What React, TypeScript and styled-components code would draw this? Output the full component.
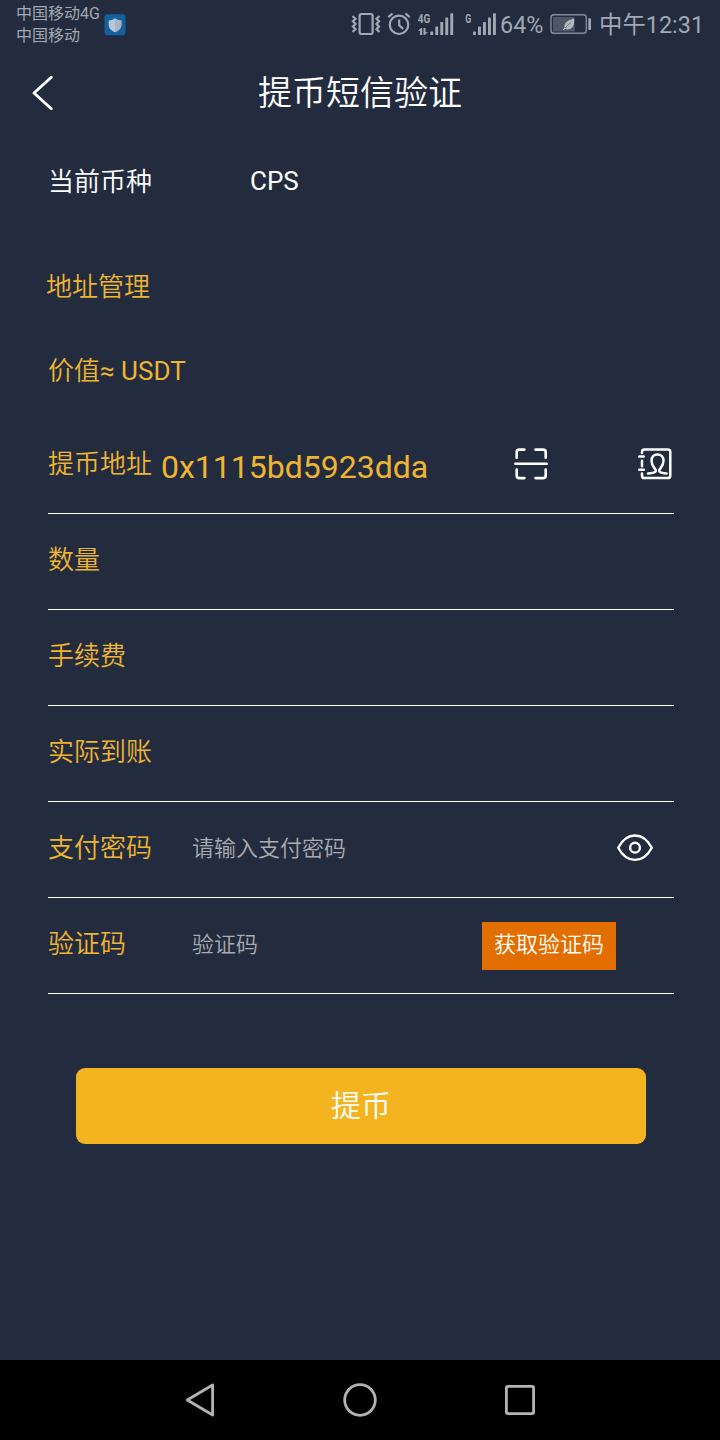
import React from 'react';
import styled, { createGlobalStyle } from 'styled-components';

const GlobalStyle = createGlobalStyle`
  * { box-sizing: border-box; }
  body {
    margin: 0;
    background: #222c3e;
    font-family: Roboto, "Noto Sans CJK SC", sans-serif;
    color: #fff;
  }
  button, input { font-family: inherit; }
`;

const Screen = styled.div`
  width: 720px;
  height: 1440px;
  display: flex;
  flex-direction: column;
  background: #222c3e;
  overflow: hidden;
`;

const StatusBar = styled.div`
  height: 48px;
  display: flex;
  align-items: flex-start;
  padding-left: 16px;
  color: #a2a8b3;
`;

const Carriers = styled.div`
  width: 88px;
  padding-top: 3px;
  font-size: 16px;
  line-height: 22px;
  white-space: nowrap;
`;

const StatusIcons = styled.svg`
  display: block;
  flex: none;
`;

const StatusRight = styled.div`
  margin-left: auto;
  display: flex;
  width: 370px;
`;

const StatusText = styled.span<{ $width: number }>`
  width: ${(p) => p.$width}px;
  padding-top: 1px;
  font-size: 23.4px;
  line-height: 48px;
  white-space: nowrap;
`;

const Header = styled.header`
  height: 90px;
  display: grid;
  grid-template-columns: 72px 1fr 72px;
  align-items: center;
`;

const BackButton = styled.button`
  width: 72px;
  height: 90px;
  padding: 0 0 0 30px;
  border: 0;
  background: none;
  display: flex;
  align-items: center;
`;

const Title = styled.h1`
  margin: 0;
  font-size: 34px;
  font-weight: 350;
  line-height: 91px;
  height: 90px;
  text-align: center;
`;

const Form = styled.main`
  flex: 1;
  padding: 0 46px 0 48px;
`;

const CurrencyRow = styled.div`
  display: flex;
  height: 86px;
  font-size: 26px;
  line-height: 86px;
`;

const CurrencyLabel = styled.span`
  width: 202px;
  padding-top: 1px;
  font-weight: 350;
`;

const LinkRow = styled.div`
  margin: 20px 0 0 -2px;
  height: 86px;
  font-size: 26px;
  font-weight: 350;
  line-height: 87px;
  color: #efb431;
`;

const ValueRow = styled.div`
  height: 88px;
  font-size: 26px;
  line-height: 82px;
  color: #efb431;
`;

const ValueLabel = styled.span`
  font-weight: 350;
`;

const Field = styled.div`
  height: 96px;
  display: flex;
  align-items: center;
  border-bottom: 1px solid #fff;
`;

const Label = styled.label<{ $width: number }>`
  width: ${(p) => p.$width}px;
  padding-bottom: 4px;
  font-size: 26px;
  font-weight: 350;
  line-height: 38px;
  white-space: nowrap;
  color: #efb431;
`;

const Address = styled.span`
  width: 352px;
  padding-top: 3px;
  font-size: 32px;
  line-height: 40px;
  color: #efb431;
`;

const Input = styled.input<{ $width: number }>`
  width: ${(p) => p.$width}px;
  height: 40px;
  margin-bottom: 2px;
  padding: 0;
  border: 0;
  outline: 0;
  background: none;
  font-size: 22px;
  font-weight: 350;
  color: #fff;
  &::placeholder {
    color: #a9abb0;
    opacity: 1;
  }
`;

const IconButton = styled.button<{ $push?: boolean }>`
  display: flex;
  padding: 0;
  margin: 0 0 3px ${(p) => (p.$push ? 'auto' : '0')};
  border: 0;
  background: none;
`;

const EyeButton = styled(IconButton)`
  margin: 0 0 3px;
`;

const CodeButton = styled.button`
  width: 134px;
  height: 48px;
  padding: 0 0 2px;
  border: 0;
  background: #e36e00;
  color: #fff;
  font-size: 22px;
  font-weight: 350;
  line-height: 46px;
`;

const Submit = styled.button`
  display: block;
  width: 570px;
  height: 76px;
  margin: 74px 0 0 28px;
  padding: 0 0 7px;
  border: 0;
  border-radius: 9px;
  background: #f4b41f;
  color: #fff;
  font-size: 30px;
  font-weight: 350;
`;

const NavBar = styled.nav`
  height: 80px;
  display: flex;
  justify-content: center;
  align-items: center;
  gap: 120px;
  background: #000;
`;

const bars = [31.5, 26.5, 22, 17.5, 13.3];

const SignalBars = ({ x }: { x: number }) => (
  <>
    {bars.map((top, i) => (
      <rect key={top} x={x + i * 5} y={top} width="2.9" height={35 - top} rx="0.6" />
    ))}
  </>
);

const ShieldIcon = () => (
  <StatusIcons width="22" height="48" viewBox="104 0 22 48">
    <rect x="104.5" y="14.300" width="21" height="21" rx="3" fill="#13609f" />
    <path d="M115 18.300c2 1.600 4 2 6.300 2.200V25c0 3.500-3 5.800-6.300 7.200-3.300-1.400-6.300-3.700-6.300-7.200v-4.500C111 20.300 113 19.900 115 18.300z" fill="#b9c7d6" />
    <path d="M115 18.300c2 1.600 4 2 6.300 2.200V25c0 3.500-3 5.800-6.300 7.200z" fill="#a6b5c7" />
  </StatusIcons>
);

const DeviceIcons = () => (
  <StatusIcons width="150" height="48" viewBox="350 0 150 48" fill="#a2a8b3">
    <g fill="none" stroke="#a2a8b3" strokeWidth="2.200">
      <rect x="359.600" y="14" width="13" height="20" rx="2" />
      <path d="M352.500 16l3 2.700-2.600 2.600 2.600 2.700-2.600 2.600 2.600 2.700-3 2.700M379.500 16l-3 2.700 2.600 2.600-2.600 2.700 2.600 2.600-2.600 2.700 3 2.700" />
      <circle cx="399" cy="24.800" r="9.200" />
      <path d="M399.200 19.500v5.700l4 3.700M388.300 17.200l4.200-3.700M409.700 17.200l-4.200-3.700" />
    </g>
    <text x="417.800" y="23" fontSize="13" fontWeight="700" textLength="12.500" lengthAdjust="spacingAndGlyphs">4G</text>
    <path d="M417.800 31l3.200-3h1.200v7H420v-4.300zM423.500 28h2v4.200h2.500l-3.500 2.800h-1z" />
    <SignalBars x={430.300} />
    <text x="465.300" y="23" fontSize="13" fontWeight="700" textLength="6" lengthAdjust="spacingAndGlyphs">G</text>
    <SignalBars x={473} />
  </StatusIcons>
);

const BatteryIcon = () => (
  <StatusIcons width="49" height="48" viewBox="550 0 49 48">
    <rect x="551" y="14.700" width="35.300" height="18.600" rx="2.800" fill="none" stroke="#858c99" strokeWidth="1.400" />
    <rect x="553" y="17" width="21.700" height="14.500" fill="#4e5767" />
    <path d="M574 18.500c.6 5-.6 10-5 10.800-1.400.3-2.700 0-3.700-.5l-1.600 1.500-.8-.8 1.600-1.500c-1-4.800 3-8 9.500-9.500z" fill="#b4b9c1" />
    <path d="M565 28l6-5.500" stroke="#4e5767" strokeWidth=".7" />
    <rect x="588.300" y="18.300" width="2.700" height="11.700" rx=".8" fill="#a2a8b3" />
  </StatusIcons>
);

const BackIcon = () => (
  <svg width="26" height="40" viewBox="30 73 26 40" fill="none" stroke="#fff" strokeWidth="2.900" strokeLinecap="round" strokeLinejoin="round">
    <path d="M51.300 77.300L34 93l17.300 15.700" />
  </svg>
);

const ScanIcon = () => (
  <svg width="36" height="34" viewBox="513 447 36 34" fill="none" stroke="#fff" strokeWidth="2.600" strokeLinecap="round">
    <path d="M516.700 457.700v-5.500q0-2.600 2.600-2.600h5.100M535.500 449.600h7.600q2.600 0 2.600 2.600v5.500M516.700 469.500v6q0 2.600 2.600 2.600h5.100M535.500 478.100h7.600q2.600 0 2.600-2.600v-6M515.300 463.700h31.400" />
  </svg>
);

const ContactsIcon = () => (
  <svg width="36" height="34" viewBox="638 447 36 34" fill="none" stroke="#fff" strokeWidth="2.500" strokeLinecap="round">
    <path d="M642 453v-1q0-2.400 2.400-2.400h23.500q2.400 0 2.400 2.400v23.700q0 2.400-2.400 2.400h-23.500q-2.400 0-2.400-2.400v-2.200M642 460.700v5.600M639.300 456.600h4.500M639.300 469.700h4.500" />
    <path d="M648 473.500c4.500-.3 7.900-1 7.900-2.700 0-2-4.400-4.100-4.400-10 0-4 2.400-6.400 6-6.400s6 2.400 6 6.400c0 5.900-4.400 8-4.400 10 0 1.700 3.400 2.400 7.600 2.700" />
  </svg>
);

const EyeIcon = () => (
  <svg width="38" height="30" viewBox="616 833 38 30" fill="none" stroke="#fff" strokeWidth="2.400">
    <path d="M618.200 847.700c4-7.500 10-12.200 16.800-12.200s12.800 4.700 16.800 12.200c-4 7.500-10 12.200-16.800 12.200s-12.800-4.700-16.800-12.200z" strokeLinejoin="round" />
    <circle cx="635" cy="847.700" r="4.900" />
  </svg>
);

const NavIcon = ({ children }: { children: React.ReactNode }) => (
  <svg width="40" height="40" viewBox="0 0 40 40" fill="none" stroke="#b3b3b3" strokeWidth="2.800" strokeLinejoin="round">
    {children}
  </svg>
);

export default function App() {
  return (
    <Screen>
      <GlobalStyle />
      <StatusBar>
        <Carriers>
          <div>中国移动4G</div>
          <div>中国移动</div>
        </Carriers>
        <ShieldIcon />
        <StatusRight>
          <DeviceIcons />
          <StatusText $width={50}>64%</StatusText>
          <BatteryIcon />
          <StatusText $width={121}>中午12:31</StatusText>
        </StatusRight>
      </StatusBar>
      <Header>
        <BackButton aria-label="返回"><BackIcon /></BackButton>
        <Title>提币短信验证</Title>
      </Header>
      <Form>
        <CurrencyRow>
          <CurrencyLabel>当前币种</CurrencyLabel>
          <span>CPS</span>
        </CurrencyRow>
        <LinkRow>地址管理</LinkRow>
        <ValueRow><ValueLabel>价值</ValueLabel>≈ USDT</ValueRow>
        <Field>
          <Label $width={113}>提币地址</Label>
          <Address>0x1115bd5923dda</Address>
          <IconButton aria-label="扫码"><ScanIcon /></IconButton>
          <IconButton $push aria-label="地址簿"><ContactsIcon /></IconButton>
        </Field>
        <Field><Label $width={144}>数量</Label></Field>
        <Field><Label $width={144}>手续费</Label></Field>
        <Field><Label $width={144}>实际到账</Label></Field>
        <Field>
          <Label $width={144}>支付密码</Label>
          <Input $width={424} placeholder="请输入支付密码" />
          <EyeButton aria-label="显示密码"><EyeIcon /></EyeButton>
        </Field>
        <Field>
          <Label $width={144}>验证码</Label>
          <Input $width={290} placeholder="验证码" />
          <CodeButton>获取验证码</CodeButton>
        </Field>
        <Submit>提币</Submit>
      </Form>
      <NavBar>
        <NavIcon><path d="M7.300 20L32.600 5v30z" /></NavIcon>
        <NavIcon><circle cx="20" cy="20" r="15.300" /></NavIcon>
        <NavIcon><rect x="6.400" y="6.400" width="27.200" height="27.200" rx="1.500" /></NavIcon>
      </NavBar>
    </Screen>
  );
}
